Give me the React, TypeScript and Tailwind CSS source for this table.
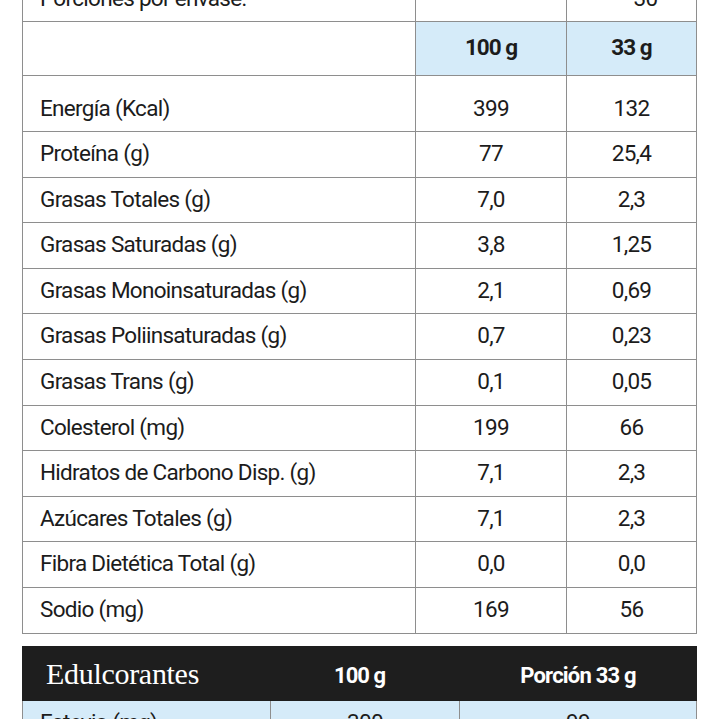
import React from "react";

const rows: [string, string, string][] = [
  ["Proteína (g)", "77", "25,4"],
  ["Grasas Totales (g)", "7,0", "2,3"],
  ["Grasas Saturadas (g)", "3,8", "1,25"],
  ["Grasas Monoinsaturadas (g)", "2,1", "0,69"],
  ["Grasas Poliinsaturadas (g)", "0,7", "0,23"],
  ["Grasas Trans (g)", "0,1", "0,05"],
  ["Colesterol (mg)", "199", "66"],
  ["Hidratos de Carbono Disp. (g)", "7,1", "2,3"],
  ["Azúcares Totales (g)", "7,1", "2,3"],
  ["Fibra Dietética Total (g)", "0,0", "0,0"],
  ["Sodio (mg)", "169", "56"],
];

const sans = { fontFamily: "Roboto, 'Noto Sans', sans-serif" };

export default function App() {
  return (
    <div className="w-[719px] h-[719px] overflow-hidden bg-white text-[#1c1c1c]" style={sans}>
      <div className="ml-[22px] w-[675px] -mt-[25px]">
        {/* Nutrition table */}
        <div className="grid grid-cols-[393px_151px_131px] text-[22.5px] tracking-[-0.7px] leading-none">
          {/* top row */}
          <div className="h-[47px] border-l border-b border-[#8e8e8e] flex items-center pl-[17px]">Porciones por envase:</div>
          <div className="h-[47px] border-l border-b border-[#8e8e8e]"></div>
          <div className="h-[47px] border-l border-r border-b border-[#8e8e8e] flex items-center justify-center pl-[28px]">30</div>
          {/* header */}
          <div className="h-[54px] border-l border-b border-[#8e8e8e]"></div>
          <div className="h-[54px] border-l border-b border-[#8e8e8e] bg-[#d5ebf9] flex items-center justify-center pb-[3px] font-bold tracking-[-1px]">100 g</div>
          <div className="h-[54px] border-l border-r border-b border-[#8e8e8e] bg-[#d5ebf9] flex items-center justify-center pb-[3px] font-bold tracking-[-1px]">33 g</div>
          {/* energy */}
          <div className="h-[56px] border-l border-b border-[#8e8e8e] flex items-center pl-[17px] pt-[13px] pb-[3px]">Energía (Kcal)</div>
          <div className="h-[56px] border-l border-b border-[#8e8e8e] flex items-center justify-center pt-[13px] pb-[3px]">399</div>
          <div className="h-[56px] border-l border-r border-b border-[#8e8e8e] flex items-center justify-center pt-[13px] pb-[3px]">132</div>
          {rows.map(([label, a, b]) => (
            <React.Fragment key={label}>
              <div className="h-[45.6px] border-l border-b border-[#8e8e8e] flex items-center pl-[17px] pb-[2px]">{label}</div>
              <div className="h-[45.6px] border-l border-b border-[#8e8e8e] flex items-center justify-center pb-[2px]">{a}</div>
              <div className="h-[45.6px] border-l border-r border-b border-[#8e8e8e] flex items-center justify-center pb-[2px]">{b}</div>
            </React.Fragment>
          ))}
        </div>

        {/* Sweeteners table */}
        <div className="mt-[12.5px]">
          <div className="h-[55px] bg-[#1e1e1e] text-white grid grid-cols-[248px_189px_238px] items-center">
            <div
              className="pl-[24px] text-[30px] leading-none tracking-[-0.3px]"
              style={{ fontFamily: "'Liberation Serif', 'Times New Roman', serif" }}
            >
              Edulcorantes
            </div>
            <div className="flex justify-center pt-[4px] pr-[10px] text-[22px] leading-none font-bold tracking-[-1px]">100 g</div>
            <div className="flex justify-center pt-[4px] text-[22px] leading-none font-bold tracking-[-0.8px]">Porción 33 g</div>
          </div>
          <div className="grid grid-cols-[248px_189px_238px] bg-[#d5ebf9] text-[22.5px] tracking-[-0.7px] leading-none">
            <div className="h-[46px] border-l border-b border-[#8e8e8e] flex items-center pl-[17px] pb-[2px]">Estevia (mg)</div>
            <div className="h-[46px] border-l border-b border-[#8e8e8e] flex items-center justify-center pb-[2px]">300</div>
            <div className="h-[46px] border-l border-r border-b border-[#8e8e8e] flex items-center justify-center pb-[2px]">99</div>
          </div>
        </div>
      </div>
    </div>
  );
}
